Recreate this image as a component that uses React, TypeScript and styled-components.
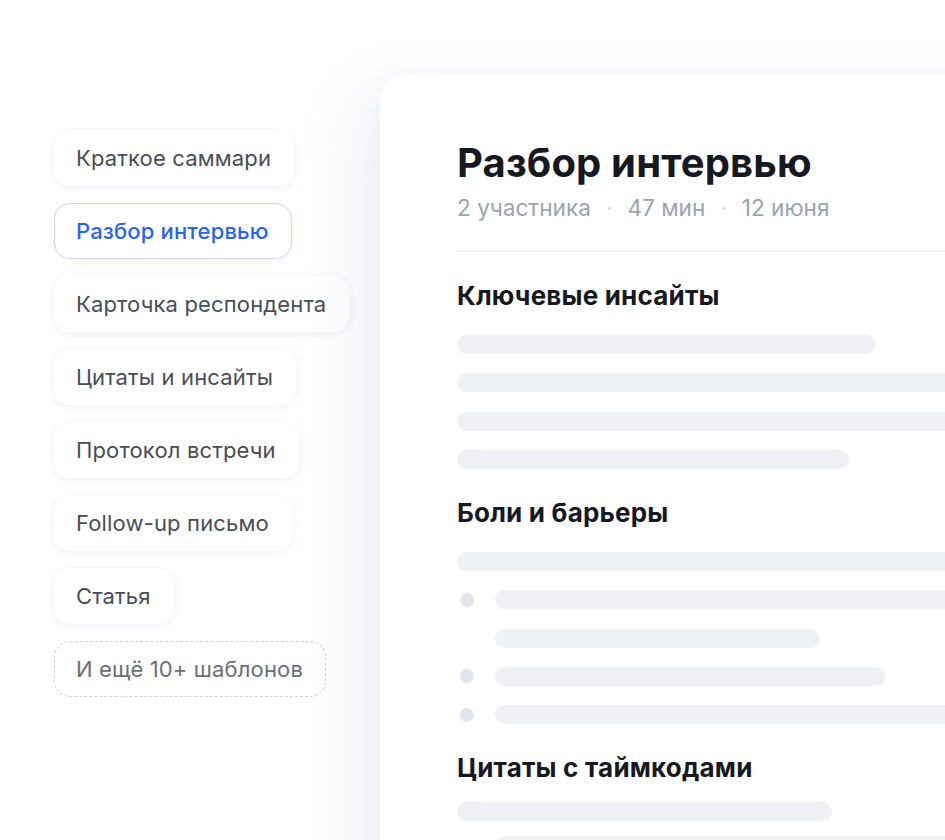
import styled, { createGlobalStyle } from 'styled-components';

const GlobalStyle = createGlobalStyle`
    html, body {
        margin: 0;
        padding: 0;
        background: #ffffff;
    }
    body {
        font-family: Inter, 'Noto Sans', sans-serif;
        -webkit-font-smoothing: antialiased;
    }
`;

const templates = [
    'Краткое саммари',
    'Разбор интервью',
    'Карточка респондента',
    'Цитаты и инсайты',
    'Протокол встречи',
    'Follow-up письмо',
    'Статья',
];

type Line = { width?: number; dot?: boolean; indent?: boolean };

const sections: { title: string; tight?: boolean; lines: Line[] }[] = [
    {
        title: 'Ключевые инсайты',
        lines: [{ width: 419 }, {}, {}, { width: 392 }],
    },
    {
        title: 'Боли и барьеры',
        lines: [{}, { dot: true }, { indent: true, width: 325 }, { dot: true, width: 390 }, { dot: true }],
    },
    {
        title: 'Цитаты с таймкодами',
        tight: true,
        lines: [{ width: 375 }, { indent: true }],
    },
];

const App = () => {
    return (
        <Page>
            <GlobalStyle />
            <Sidebar>
                {templates.map((name, index) => (
                    <Pill key={name} $active={index === 1}>
                        {name}
                    </Pill>
                ))}
                <MorePill>И ещё 10+ шаблонов</MorePill>
            </Sidebar>
            <Card>
                <Title>Разбор интервью</Title>
                <Meta>
                    2 участника<Sep>·</Sep>47 мин<Sep>·</Sep>12 июня
                </Meta>
                <Divider />
                {sections.map((section) => (
                    <Section key={section.title}>
                        <SectionTitle>{section.title}</SectionTitle>
                        <Lines $tight={section.tight}>
                            {section.lines.map((line, i) => (
                                <Row key={i}>
                                    {(line.dot || line.indent) && <Dot $hidden={!line.dot} />}
                                    <Bar $width={line.width} />
                                </Row>
                            ))}
                        </Lines>
                    </Section>
                ))}
            </Card>
        </Page>
    );
};

export default App;

const Page = styled.div`
    display: flex;
    align-items: flex-start;
    width: 945px;
    height: 840px;
    overflow: hidden;
    background: #ffffff;
`;

const Sidebar = styled.nav`
    display: flex;
    flex-direction: column;
    align-items: flex-start;
    gap: 17px;
    width: 326px;
    padding: 130px 0 0 54px;
    flex-shrink: 0;
`;

const Pill = styled.div<{ $active?: boolean }>`
    display: flex;
    align-items: center;
    box-sizing: border-box;
    height: 56px;
    padding: 0 22px 0 21px;
    border-radius: 16px;
    font-size: 22px;
    font-weight: ${(p) => (p.$active ? 500 : 400)};
    letter-spacing: 0.15px;
    white-space: nowrap;
    background: #ffffff;
    color: ${(p) => (p.$active ? '#2c63ee' : '#4a4d57')};
    border: 1.5px solid ${(p) => (p.$active ? '#cad8fa' : 'transparent')};
    box-shadow: ${(p) =>
        p.$active ? '0 2px 10px rgba(44, 99, 238, 0.06)' : '0 2px 10px rgba(30, 40, 80, 0.07)'};
`;

const MorePill = styled(Pill)`
    background: transparent;
    color: #6d6f76;
    border: 1.5px dashed #cdd3df;
    box-shadow: none;
`;

const Card = styled.main`
    flex-shrink: 0;
    box-sizing: border-box;
    width: 700px;
    min-height: 900px;
    margin-top: 75px;
    padding: 62px 77px 0;
    background: #ffffff;
    border-radius: 26px;
    box-shadow: -24px 20px 70px rgba(70, 85, 150, 0.09), 0 0 30px rgba(30, 40, 80, 0.03);
`;

const Title = styled.h1`
    margin: 0;
    font-size: 40px;
    line-height: 52px;
    font-weight: 700;
    letter-spacing: 0.15px;
    color: #171821;
`;

const Meta = styled.div`
    margin-top: 4px;
    font-size: 22.6px;
    line-height: 30px;
    color: #9ea3b0;
`;

const Sep = styled.span`
    display: inline-block;
    margin: 0 15px;
    color: #d3d6de;
`;

const Divider = styled.hr`
    margin: 27px 0 0;
    border: 0;
    height: 2px;
    background: #f0f1f5;
`;

const Section = styled.section`
    margin-top: 28px;
`;

const SectionTitle = styled.h2`
    margin: 0;
    font-size: 26px;
    line-height: 32px;
    font-weight: 700;
    letter-spacing: 0.2px;
    color: #171821;
`;

const Lines = styled.div<{ $tight?: boolean }>`
    display: flex;
    flex-direction: column;
    gap: ${(p) => (p.$tight ? 15 : 19.33)}px;
    margin-top: ${(p) => (p.$tight ? 18 : 23)}px;
`;

const Row = styled.div`
    display: flex;
    align-items: center;
    gap: 21px;
`;

const Dot = styled.span<{ $hidden?: boolean }>`
    flex-shrink: 0;
    width: 14px;
    height: 14px;
    margin-left: 3px;
    border-radius: 50%;
    background: ${(p) => (p.$hidden ? 'transparent' : '#e2e5ec')};
`;

const Bar = styled.div<{ $width?: number }>`
    height: 19px;
    border-radius: 10px;
    background: #f0f1f5;
    ${(p) => (p.$width ? `width: ${p.$width}px; flex-shrink: 0;` : 'flex: 1;')}
`;
